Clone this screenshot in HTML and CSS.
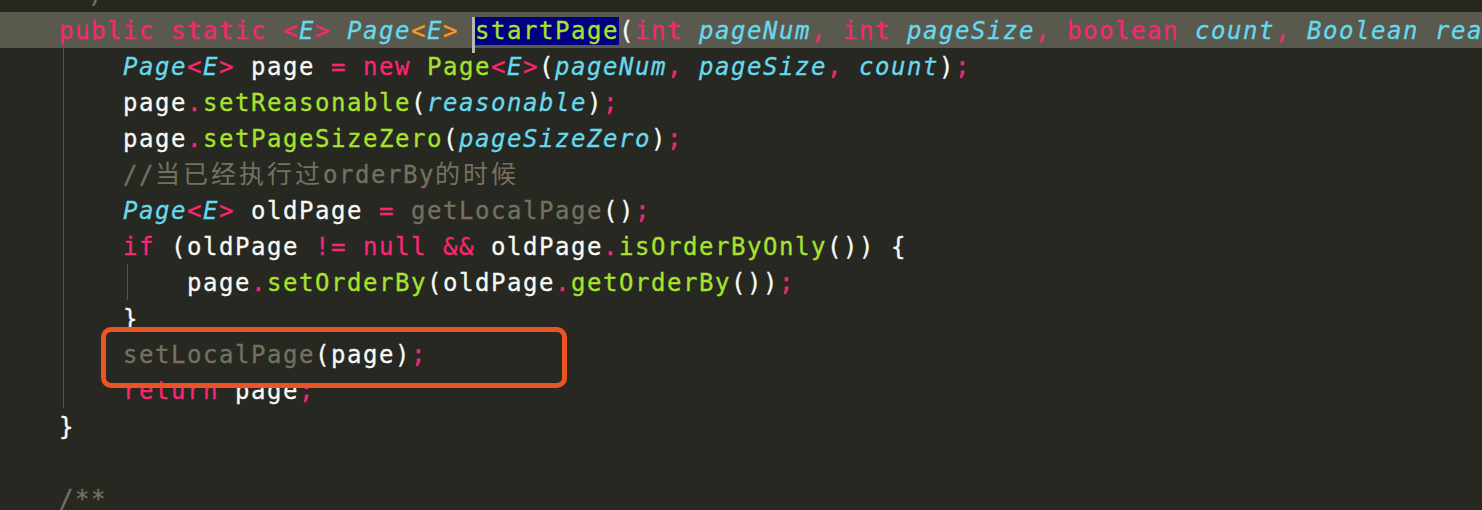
FILE: index.html
```html
<!DOCTYPE html>
<html lang="zh">
<head>
  <meta charset="UTF-8">
  <title>PageHelper.startPage</title>
  <link rel="stylesheet" href="styles.css">
</head>
<body>
  <div class="editor">
    <div class="line"><span class="c"> */</span></div>
    <div class="line current"><span class="k">public static</span> <span class="k">&lt;</span><span class="t">E</span><span class="k">&gt;</span> <span class="t">Page</span><span class="o">&lt;</span><span class="t">E</span><span class="o">&gt;</span> <span class="sel">startPage</span>(<span class="k">int</span> <span class="p">pageNum</span><span class="k">,</span> <span class="k">int</span> <span class="p">pageSize</span><span class="k">,</span> <span class="k">boolean</span> <span class="p">count</span><span class="k">,</span> <span class="t">Boolean</span> <span class="p">reasonable</span><span class="k">,</span> <span class="t">Boolean</span> <span class="p">pageSizeZero</span>) {</div>
    <div class="line guide">    <span class="t">Page</span><span class="k">&lt;</span><span class="t">E</span><span class="k">&gt;</span> page <span class="k">=</span> <span class="k">new</span> <span class="f">Page</span><span class="k">&lt;</span><span class="t">E</span><span class="k">&gt;</span>(<span class="p">pageNum</span><span class="k">,</span> <span class="p">pageSize</span><span class="k">,</span> <span class="p">count</span>)<span class="k">;</span></div>
    <div class="line guide">    page<span class="k">.</span><span class="f">setReasonable</span>(<span class="p">reasonable</span>)<span class="k">;</span></div>
    <div class="line guide">    page<span class="k">.</span><span class="f">setPageSizeZero</span>(<span class="p">pageSizeZero</span>)<span class="k">;</span></div>
    <div class="line guide">    <span class="c">//<span class="cjk">当已经执行过</span>orderBy<span class="cjk">的时候</span></span></div>
    <div class="line guide">    <span class="t">Page</span><span class="k">&lt;</span><span class="t">E</span><span class="k">&gt;</span> oldPage <span class="k">=</span> <span class="g">getLocalPage</span>()<span class="k">;</span></div>
    <div class="line guide">    <span class="k">if</span> (oldPage <span class="k">!=</span> <span class="k">null</span> <span class="k">&amp;&amp;</span> oldPage<span class="k">.</span><span class="f">isOrderByOnly</span>()) {</div>
    <div class="line guide2">        page<span class="k">.</span><span class="f">setOrderBy</span>(oldPage<span class="k">.</span><span class="f">getOrderBy</span>())<span class="k">;</span></div>
    <div class="line guide">    }</div>
    <div class="line guide marked">    <span class="g">setLocalPage</span>(page)<span class="k">;</span><span class="mark"></span></div>
    <div class="line guide">    <span class="k">return</span> page<span class="k">;</span></div>
    <div class="line">}</div>
    <div class="line"></div>
    <div class="line"><span class="c">/**</span></div>
  </div>
</body>
</html>
```

FILE: styles.css
```css
html, body {
  margin: 0;
  padding: 0;
  background-color: #272822;
  overflow: hidden;
}
.editor {
  margin-top: -24px;
  font-family: "DejaVu Sans Mono", monospace;
  font-size: 24px;
  letter-spacing: 1.55px;
  color: #f8f8f2;
  -webkit-text-stroke: 0.3px currentColor;
}
.line {
  height: 36px;
  line-height: 39px;
  padding-left: 59px;
  white-space: pre;
}
.current {
  background-color: #5a594e;
}
.guide {
  background: linear-gradient(#55544d, #55544d) 63px 0 / 1px 100% no-repeat;
}
.guide2 {
  background:
    linear-gradient(#55544d, #55544d) 63px 0 / 1px 100% no-repeat,
    linear-gradient(#55544d, #55544d) 127px 0 / 1px 100% no-repeat;
}
.k { color: #f92672; }
.t { color: #66d9ef; font-style: italic; }
.p { color: #66d9ef; font-style: italic; }
.f { color: #a6e22e; }
.o { color: #fd971f; }
.c { color: #75715e; }
.g { color: #75715e; }
.cjk {
  font-family: "Noto Sans CJK SC", sans-serif;
  font-size: 25px;
  letter-spacing: 3px;
  line-height: 1;
  -webkit-text-stroke: 0;
}
.sel {
  position: relative;
  color: #a6e22e;
  background-color: #000080;
}
.sel::before {
  content: "";
  position: absolute;
  left: -3px;
  top: 0;
  width: 3px;
  height: 36px;
  background-color: #b9b9b4;
}
.marked {
  position: relative;
}
.mark {
  position: absolute;
  left: 101px;
  top: -9px;
  width: 456px;
  height: 51px;
  border: 5px solid #ec5424;
  border-radius: 10px;
}
```
